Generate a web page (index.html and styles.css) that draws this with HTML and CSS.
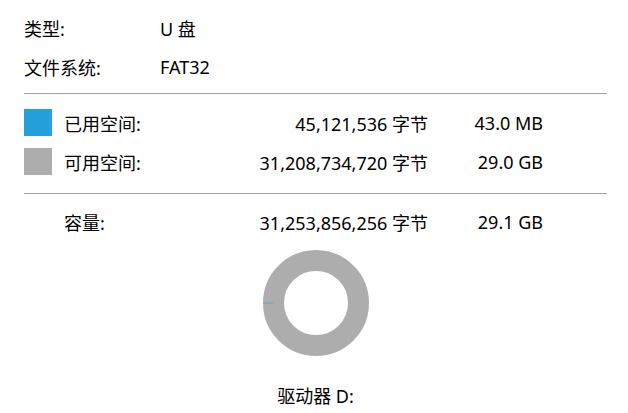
FILE: index.html
```html
<!DOCTYPE html>
<html lang="zh-CN">
<head>
<meta charset="utf-8">
<link rel="stylesheet" href="styles.css">
</head>
<body>
<div class="page">
  <div class="info">
    <div class="info-row"><span class="key">类型:</span><span class="val">U 盘</span></div>
    <div class="info-row"><span class="key">文件系统:</span><span class="val">FAT32</span></div>
  </div>
  <hr class="sep">
  <div class="space">
    <div class="space-row"><span class="swatch used"></span><span class="label">已用空间:</span><span class="bytes">45,121,536 字节</span><span class="size">43.0 MB</span></div>
    <div class="space-row"><span class="swatch free"></span><span class="label">可用空间:</span><span class="bytes">31,208,734,720 字节</span><span class="size">29.0 GB</span></div>
  </div>
  <hr class="sep">
  <div class="space cap">
    <div class="space-row"><span class="swatch"></span><span class="label">容量:</span><span class="bytes">31,253,856,256 字节</span><span class="size">29.1 GB</span></div>
  </div>
  <div class="chart">
    <svg class="donut" width="106" height="106" viewBox="0 0 106 106">
      <circle cx="53" cy="53" r="42.5" fill="none" stroke="#adadad" stroke-width="21"/>
      <line x1="0" y1="53" x2="10" y2="53" stroke="#5aa8d8" stroke-width="1"/>
    </svg>
    <div class="drive">驱动器 D:</div>
  </div>
</div>
</body>
</html>
```

FILE: styles.css
```css
html, body {
  margin: 0;
  padding: 0;
  background: #ffffff;
}
body {
  font-family: "Noto Sans", "Noto Sans CJK SC", sans-serif;
  font-size: 18px;
  color: #000000;
  width: 628px;
  height: 413px;
  overflow: hidden;
}
.page {
  padding: 8px 21px 0 24px;
}
.info-row {
  display: flex;
  align-items: center;
  height: 39px;
}
.key {
  width: 136px;
}
.sep {
  margin: 0;
  border: 0;
  height: 1px;
  background: #a0a0a0;
}
.info + .sep {
  margin-top: 7px;
}
.space {
  padding-top: 9px;
}
.space-row {
  display: grid;
  grid-template-columns: 40px 120px 244px 115px;
  align-items: center;
  height: 39px;
}
.swatch {
  width: 28px;
  height: 27px;
}
.swatch.used { background: #26a0da; }
.swatch.free { background: #adadad; }
.bytes, .size {
  text-align: right;
  white-space: nowrap;
}
.space + .sep {
  margin-top: 12px;
}
.cap {
  padding-top: 8px;
}
.chart {
  display: flex;
  flex-direction: column;
  align-items: center;
  width: 583px;
  padding-top: 9px;
}
.donut {
  display: block;
}
.drive {
  margin-top: 28px;
  line-height: 24px;
}
```
